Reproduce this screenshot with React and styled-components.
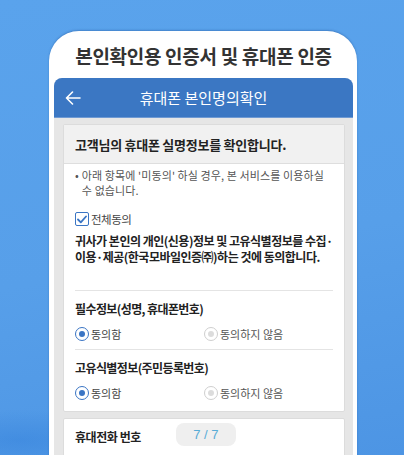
import styled, { createGlobalStyle } from "styled-components";

const GlobalStyle = createGlobalStyle`
  html, body {
    margin: 0;
    padding: 0;
  }

  body {
    font-family: "Noto Sans CJK KR", "Noto Sans", sans-serif;
  }
`;

function BackArrow() {
  return (
    <svg width="16" height="14" viewBox="0 0 16 14" fill="none">
      <path
        d="M15 7H1.5M7.5 1L1.5 7l6 6"
        stroke="#fff"
        strokeWidth="1.6"
        strokeLinecap="round"
        strokeLinejoin="round"
      />
    </svg>
  );
}

function CheckBox() {
  return (
    <CheckBoxFrame>
      <svg width="10" height="9" viewBox="0 0 10 9" fill="none">
        <path
          d="M1 4.5l2.8 2.8L9 1.5"
          stroke="#3a75c4"
          strokeWidth="1.8"
          strokeLinecap="round"
          strokeLinejoin="round"
        />
      </svg>
    </CheckBoxFrame>
  );
}

function Radio({ checked, label }) {
  return (
    <RadioItem $checked={checked}>
      <RadioCircle $checked={checked} />
      {label}
    </RadioItem>
  );
}

function App() {
  return (
    <>
      <GlobalStyle />
      <Page>
        <Phone>
          <Title>본인확인용 인증서 및 휴대폰 인증</Title>
          <Screen>
            <Header>
              <BackButton>
                <BackArrow />
              </BackButton>
              <HeaderTitle>휴대폰 본인명의확인</HeaderTitle>
            </Header>
            <Content>
              <Card>
                <CardHead>고객님의 휴대폰 실명정보를 확인합니다.</CardHead>
                <CardBody>
                  <Notice>
                    <span>•</span>
                    <span>
                      아래 항목에 '미동의' 하실 경우, 본 서비스를 이용하실 수
                      없습니다.
                    </span>
                  </Notice>
                  <CheckRow>
                    <CheckBox />
                    전체동의
                  </CheckRow>
                  <Agreement>
                    귀사가 본인의 개인(신용)정보 및 고유식별정보를 수집·
                    <br />
                    이용·제공(한국모바일인증㈜)하는 것에 동의합니다.
                  </Agreement>
                  <Section>
                    <SectionTitle>필수정보(성명, 휴대폰번호)</SectionTitle>
                    <RadioRow>
                      <Radio checked label="동의함" />
                      <Radio label="동의하지 않음" />
                    </RadioRow>
                  </Section>
                  <Section>
                    <SectionTitle>고유식별정보(주민등록번호)</SectionTitle>
                    <RadioRow>
                      <Radio checked label="동의함" />
                      <Radio label="동의하지 않음" />
                    </RadioRow>
                  </Section>
                </CardBody>
              </Card>
              <PhoneCard>
                <PhoneLabel>휴대전화 번호</PhoneLabel>
                <CountPill>7 / 7</CountPill>
              </PhoneCard>
            </Content>
          </Screen>
        </Phone>
      </Page>
    </>
  );
}

const Page = styled.div`
  width: 404px;
  height: 455px;
  overflow: hidden;
  box-sizing: border-box;
  padding: 31px 0 0 49px;
  background:
    radial-gradient(ellipse 120px 30px at 20px 440px, rgba(40, 120, 215, 0.35), transparent),
    linear-gradient(170deg, #5aa3ec 0%, #579fe9 55%, #4d95e4 100%);
`;

const Phone = styled.div`
  width: 308px;
  height: 440px;
  box-sizing: border-box;
  padding: 0 4px 0 5px;
  background: #fff;
  border-radius: 30px 30px 0 0;
  box-shadow: 0 -1px 2px rgba(40, 90, 160, 0.45);
`;

const Title = styled.div`
  height: 47px;
  display: flex;
  align-items: center;
  justify-content: center;
  padding-top: 1px;
  box-sizing: border-box;
  font-size: 19px;
  font-weight: 700;
  letter-spacing: -0.3px;
  color: #333;
`;

const Screen = styled.div`
  background: #e6e6e6;
  border-radius: 8px 8px 0 0;
  overflow: hidden;
  height: 400px;
`;

const Header = styled.div`
  height: 39px;
  display: grid;
  grid-template-columns: 40px 1fr 40px;
  align-items: center;
  background: #3b77c3;
  border-bottom: 1px solid #6f9ad3;
`;

const BackButton = styled.div`
  display: flex;
  align-items: center;
  padding-left: 11px;
`;

const HeaderTitle = styled.div`
  text-align: center;
  color: #fff;
  font-size: 15px;
  letter-spacing: 0;
`;

const Content = styled.div`
  display: flex;
  flex-direction: column;
  gap: 6px;
  padding: 6px 8px 0 9px;
`;

const Card = styled.div`
  background: #fff;
  border: 1px solid #dcdcdc;
  border-radius: 2px;
`;

const CardHead = styled.div`
  height: 38px;
  display: flex;
  align-items: center;
  padding-left: 11px;
  background: #f1f1f1;
  border-bottom: 1px solid #dedede;
  font-size: 13px;
  font-weight: 700;
  letter-spacing: -0.25px;
  color: #222;
`;

const CardBody = styled.div`
  padding: 4px 11px 3px 11px;
`;

const Notice = styled.div`
  display: flex;
  gap: 3px;
  font-size: 11px;
  line-height: 15px;
  letter-spacing: 0.1px;
  color: #555;
`;

const CheckRow = styled.div`
  display: flex;
  align-items: center;
  gap: 2px;
  margin-top: 13px;
  font-size: 11.5px;
  letter-spacing: -0.5px;
  color: #444;
`;

const CheckBoxFrame = styled.span`
  width: 14px;
  height: 14px;
  box-sizing: border-box;
  display: inline-flex;
  align-items: center;
  justify-content: center;
  border: 1.5px solid #3a75c4;
  border-radius: 2px;
`;

const Agreement = styled.div`
  margin-top: 6px;
  padding-bottom: 25px;
  border-bottom: 1px solid #e4e4e4;
  font-size: 12px;
  line-height: 16px;
  font-weight: 700;
  letter-spacing: -0.5px;
  color: #222;
`;

const Section = styled.div`
  padding: 10px 0 7px;

  & + & {
    border-top: 1px solid #e4e4e4;
  }
`;

const SectionTitle = styled.div`
  font-size: 12px;
  line-height: 16px;
  font-weight: 700;
  letter-spacing: -0.6px;
  color: #222;
`;

const RadioRow = styled.div`
  display: grid;
  grid-template-columns: 129px 1fr;
  margin-top: 9px;
`;

const RadioItem = styled.div`
  display: flex;
  align-items: center;
  gap: 2px;
  font-size: 11px;
  letter-spacing: 0;
  color: ${({ $checked }) => ($checked ? "#444" : "#555")};
`;

const RadioCircle = styled.span`
  width: 14px;
  height: 14px;
  box-sizing: border-box;
  border-radius: 50%;
  border: 1.5px solid ${({ $checked }) => ($checked ? "#3a75c4" : "#cfcfcf")};
  display: inline-flex;
  align-items: center;
  justify-content: center;

  &::after {
    content: "";
    width: 6px;
    height: 6px;
    border-radius: 50%;
    background: ${({ $checked }) => ($checked ? "#3a75c4" : "#dcdcdc")};
  }
`;

const PhoneCard = styled.div`
  background: #fff;
  border: 1px solid #dcdcdc;
  border-radius: 2px;
  height: 60px;
  display: flex;
  align-items: flex-start;
  padding: 4px 11px 0;
  gap: 35px;
`;

const PhoneLabel = styled.div`
  padding-top: 5px;
  font-size: 12px;
  font-weight: 700;
  letter-spacing: -0.45px;
  color: #222;
`;

const CountPill = styled.div`
  width: 60px;
  height: 23px;
  display: flex;
  align-items: center;
  justify-content: center;
  border-radius: 8px;
  background: #efefef;
  color: #59acd6;
  font-family: "Liberation Sans", Arial, sans-serif;
  font-size: 13px;
`;

export default App;
